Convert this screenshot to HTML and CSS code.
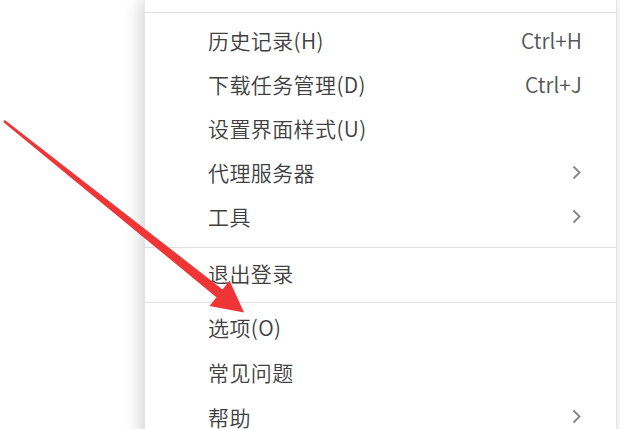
FILE: index.html
```html
<!DOCTYPE html>
<html lang="zh-CN">
<head>
    <meta charset="UTF-8">
    <title>菜单</title>
    <link rel="stylesheet" href="styles.css">
</head>
<body>
    <div class="page">
        <div class="menu">
            <div class="menu-top"></div>

            <div class="menu-group first">
                <div class="menu-item"><span>历史记录(H)</span><span class="shortcut">Ctrl+H</span></div>
                <div class="menu-item"><span>下载任务管理(D)</span><span class="shortcut">Ctrl+J</span></div>
                <div class="menu-item"><span>设置界面样式(U)</span></div>
                <div class="menu-item"><span>代理服务器</span><svg class="chevron" width="9" height="15" viewBox="0 0 9 15"><polyline points="1.5,1.5 7.5,7.5 1.5,13.5" fill="none" stroke="#858585" stroke-width="1.8"/></svg></div>
                <div class="menu-item"><span>工具</span><svg class="chevron" width="9" height="15" viewBox="0 0 9 15"><polyline points="1.5,1.5 7.5,7.5 1.5,13.5" fill="none" stroke="#858585" stroke-width="1.8"/></svg></div>
            </div>

            <div class="menu-group single">
                <div class="menu-item"><span>退出登录</span></div>
            </div>

            <div class="menu-group last">
                <div class="menu-item"><span>选项(O)</span></div>
                <div class="menu-item"><span>常见问题</span></div>
                <div class="menu-item"><span>帮助</span><svg class="chevron" width="9" height="15" viewBox="0 0 9 15"><polyline points="1.5,1.5 7.5,7.5 1.5,13.5" fill="none" stroke="#858585" stroke-width="1.8"/></svg></div>
            </div>
        </div>

        <!-- annotation arrow drawn over the screenshot -->
        <svg class="arrow" width="620" height="429" viewBox="0 0 620 429">
            <polygon fill="#ef3535" points="4.8,120 222.6,289.4 229.5,280.5 244,312.5 209.5,306 216.4,297.2 3.2,122"/>
        </svg>
    </div>
</body>
</html>
```

FILE: styles.css
```css
html, body {
    margin: 0;
    padding: 0;
    background: #fff;
}
.page {
    position: relative;
    width: 620px;
    height: 429px;
    overflow: hidden;
    font-family: "Noto Sans CJK SC", "Noto Sans", sans-serif;
}
.menu {
    margin-left: 145px;
    width: 471px;
    height: 460px;
    background: #fff;
    border-right: 1px solid #e4e4e4;
    box-shadow: -4px 0 16px rgba(0,0,0,0.18);
}
.menu-top {
    height: 12px;
}
.menu-group {
    border-top: 1px solid #e0e0e0;
}
.menu-group.first {
    padding: 7px 0;
}
.menu-group.single {
    padding: 4px 0;
}
.menu-group.last {
    padding: 3px 0 0;
}
.menu-item {
    box-sizing: border-box;
    display: flex;
    align-items: center;
    justify-content: space-between;
    height: 44px;
    padding: 0 34px 4px 63px;
    font-size: 21px;
    font-weight: 350;
    letter-spacing: 0.4px;
    color: #404040;
}
.menu-group.single .menu-item {
    height: 46px;
}
.menu-group.last .menu-item {
    height: 45px;
}
.shortcut {
    color: #555;
    font-size: 21px;
    letter-spacing: 0;
}
.chevron {
    margin-right: 1px;
}
.arrow {
    position: absolute;
    left: 0;
    top: 0;
}
```
